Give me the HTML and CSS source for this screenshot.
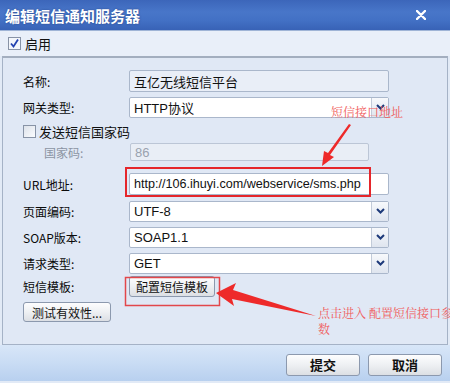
FILE: index.html
```html
<!DOCTYPE html>
<html lang="zh-CN">
<head>
    <meta charset="UTF-8">
    <title>编辑短信通知服务器</title>
    <link rel="stylesheet" href="styles.css">
</head>
<body>
    <div class="window">
        <div class="titlebar">
            <span class="title">编辑短信通知服务器</span>
            <svg class="close" width="10" height="10" viewBox="0 0 10 10">
                <path d="M1 1 L9 9 M9 1 L1 9" stroke="#fff" stroke-width="2.4" stroke-linecap="round"/>
            </svg>
        </div>

        <div class="enable-row">
            <span class="check checked">
                <svg width="11" height="11" viewBox="0 0 11 11"><path d="M2 5.5 L4.5 8.5 L9 1.5" fill="none" stroke="#2342b0" stroke-width="1.8"/></svg>
            </span>
            <span>启用</span>
        </div>

        <div class="panel">
            <div class="row first">
                <label>名称:</label>
                <div class="field readonly">互亿无线短信平台</div>
            </div>
            <div class="row">
                <label>网关类型:</label>
                <div class="field select">HTTP协议<span class="drop"><svg width="9" height="6" viewBox="0 0 9 6"><path d="M1 1 L4.5 4.5 L8 1" fill="none" stroke="#1d3a7a" stroke-width="2"/></svg></span></div>
            </div>
            <div class="row check-row">
                <span class="check"></span>
                <span>发送短信国家码</span>
            </div>
            <div class="row sub-row">
                <label class="muted">国家码:</label>
                <div class="field disabled">86</div>
            </div>
            <div class="row url-row">
                <label>URL地址:</label>
                <div class="field url">http://106.ihuyi.com/webservice/sms.php</div>
            </div>
            <div class="row">
                <label>页面编码:</label>
                <div class="field select">UTF-8<span class="drop"><svg width="9" height="6" viewBox="0 0 9 6"><path d="M1 1 L4.5 4.5 L8 1" fill="none" stroke="#1d3a7a" stroke-width="2"/></svg></span></div>
            </div>
            <div class="row">
                <label>SOAP版本:</label>
                <div class="field select">SOAP1.1<span class="drop"><svg width="9" height="6" viewBox="0 0 9 6"><path d="M1 1 L4.5 4.5 L8 1" fill="none" stroke="#1d3a7a" stroke-width="2"/></svg></span></div>
            </div>
            <div class="row">
                <label>请求类型:</label>
                <div class="field select">GET<span class="drop"><svg width="9" height="6" viewBox="0 0 9 6"><path d="M1 1 L4.5 4.5 L8 1" fill="none" stroke="#1d3a7a" stroke-width="2"/></svg></span></div>
            </div>
            <div class="row tpl-row">
                <label>短信模板:</label>
                <button class="btn">配置短信模板</button>
            </div>
            <div class="row test-row">
                <button class="btn">测试有效性...</button>
            </div>
        </div>

        <div class="footer">
            <button class="btn wide">提交</button>
            <button class="btn wide">取消</button>
        </div>

        <!-- 标注层 -->
        <svg class="marks" width="450" height="383" viewBox="0 0 450 383">
            <rect x="126" y="168" width="244" height="28" fill="none" stroke="#e5262b" stroke-width="2"/>
            <rect x="125.5" y="277.5" width="94" height="28" fill="none" stroke="#e2474b" stroke-width="1.5"/>
            <polygon points="351,125 349,124 328,153 324,151 322,166 334,157 330,155" fill="#ee2a2a"/>
            <polygon points="216,293 236,283 233,290 316,316 232,299 234,306" fill="#ee2a2a"/>
        </svg>
        <div class="note note-url">短信接口地址</div>
        <div class="note note-tpl">点击进入 配置短信接口参<br>数</div>
    </div>
</body>
</html>
```

FILE: styles.css
```css
body {
    margin: 0;
    font-family: "Noto Sans CJK SC", "Liberation Sans", sans-serif;
    font-size: 12px;
    color: #111;
}
.window {
    position: relative;
    width: 450px;
    height: 383px;
    background: #e2eaf6;
    overflow: hidden;
}
.titlebar {
    height: 31px;
    display: flex;
    align-items: center;
    justify-content: space-between;
    padding: 0 24px 0 5px;
    box-sizing: border-box;
    background: linear-gradient(180deg, #3c66ba 0%, #4876c9 40%, #4270c4 70%, #3862b6 100%);
    border-bottom: 1px solid #9fb4d6;
}
.title {
    color: #fff;
    font-size: 15px;
    font-weight: bold;
    text-shadow: 0 0 2px rgba(20, 40, 100, 0.6);
}
.close {
    display: block;
}
.enable-row {
    height: 25px;
    display: flex;
    align-items: center;
    gap: 4px;
    padding-left: 8px;
    background: #e9eff9;
    font-size: 13px;
}
.check {
    width: 11px;
    height: 11px;
    border: 1px solid #8893a6;
    background: linear-gradient(135deg, #dde2ea, #fbfcfe);
    display: inline-flex;
    align-items: center;
    justify-content: center;
}
.check.checked {
    background: #f3f6fb;
}
.panel {
    margin: 0 2px;
    height: 289px;
    box-sizing: border-box;
    border: 1px solid #a5b2c6;
    border-top: 2px solid #a3aebf;
    padding: 12px 0 0 20px;
    background: #e0e8f5;
}
.row {
    display: flex;
    align-items: center;
    height: 22px;
    margin-bottom: 4px;
}
.row label {
    width: 106px;
    flex: none;
    color: #0a0a0a;
}
.field {
    position: relative;
    width: 260px;
    height: 22px;
    box-sizing: border-box;
    border: 1px solid #aab7cb;
    border-radius: 2px;
    background: #fff;
    padding: 0 4px;
    display: flex;
    align-items: center;
    font-size: 13px;
    font-family: "Liberation Sans", "Noto Sans CJK SC", sans-serif;
    color: #111;
}
.field.readonly {
    background: #e9eef7;
}
.field.select {
    height: 21px;
}
.field.url {
    font-size: 12.6px;
}
.drop {
    position: absolute;
    right: 0;
    top: 0;
    bottom: 0;
    width: 16px;
    border-left: 1px solid #c2cbd9;
    background: linear-gradient(180deg, #f7f9fc, #dfe5ef);
    display: flex;
    align-items: center;
    justify-content: center;
}
.check-row {
    height: 18px;
    gap: 3px;
    margin-bottom: 3px;
    font-size: 13px;
}
.sub-row {
    height: 18px;
    margin-bottom: 12px;
}
.sub-row label {
    width: 107px;
    padding-left: 21px;
    box-sizing: border-box;
}
.row label.muted {
    color: #8b94a3;
}
.field.disabled {
    width: 239px;
    height: 18px;
    background: #e9eef6;
    border-color: #bcc6d6;
    color: #9aa2ae;
}
.url-row {
    margin-bottom: 5px;
}
.tpl-row {
    height: 21px;
    margin-top: -2px;
    margin-bottom: 5px;
}
.test-row {
    height: 20px;
}
.btn {
    font-family: "Noto Sans CJK SC", sans-serif;
    font-size: 12px;
    color: #111;
    height: 21px;
    padding: 0 6px;
    border: 1px solid #8c99ae;
    border-radius: 3px;
    background: linear-gradient(180deg, #fdfdfe 0%, #eef0f3 50%, #dcdfe4 100%);
    display: flex;
    align-items: center;
    justify-content: center;
}
.test-row .btn {
    width: 88px;
    height: 20px;
}
.footer {
    height: 36px;
    display: flex;
    justify-content: flex-end;
    align-items: center;
    gap: 8px;
    padding: 3px 8px 0 0;
    box-sizing: border-box;
    background: linear-gradient(180deg, #d8e6f8 0%, #c9dcf4 50%, #b8d0ef 100%);
}
.btn.wide {
    width: 74px;
    height: 22px;
    font-size: 13px;
    font-weight: bold;
}
.marks {
    position: absolute;
    left: 0;
    top: 0;
    pointer-events: none;
}
.note {
    position: absolute;
    color: #f05a5a;
    font-family: "Noto Serif CJK SC", "Noto Sans CJK SC", serif;
    font-size: 12px;
    line-height: 16px;
    white-space: nowrap;
}
.note-url {
    left: 331px;
    top: 104px;
}
.note-tpl {
    left: 318px;
    top: 305px;
}
```
